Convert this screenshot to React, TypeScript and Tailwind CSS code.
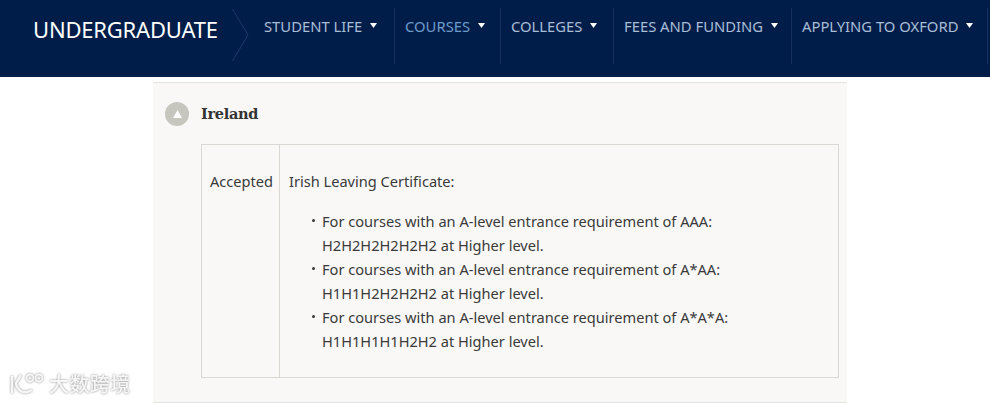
const navItems = [
  { label: "STUDENT LIFE", width: "w-[149px]", padding: "pl-[18px]", textColor: "text-[#a9bdd6]" },
  { label: "COURSES", width: "w-[106px]", padding: "pl-[10px]", textColor: "text-[#6d9ccb]" },
  { label: "COLLEGES", width: "w-[113px]", padding: "pl-[10px]", textColor: "text-[#a9bdd6]" },
  { label: "FEES AND FUNDING", width: "w-[178px]", padding: "pl-[10px]", textColor: "text-[#a9bdd6]" },
  { label: "APPLYING TO OXFORD", width: "w-[196px]", padding: "pl-[10px]", textColor: "text-[#a9bdd6]" },
];

const courses = [
  { level: "AAA", grades: "H2H2H2H2H2H2" },
  { level: "A*AA", grades: "H1H1H2H2H2H2" },
  { level: "A*A*A", grades: "H1H1H1H1H2H2" },
];

function Header() {
  return (
    <header className="flex h-[77px] bg-[#001d4a] font-['Noto_Sans',sans-serif]">
      <div className="w-[232px] shrink-0 pl-[33px] pt-[12px] text-[22px] leading-[34px] tracking-[-0.2px] text-white">
        UNDERGRADUATE
      </div>
      <svg width="17" height="54" viewBox="0 0 17 54" className="mt-[8px] shrink-0" fill="none">
        <path d="M0.5 1 L16 27 L0.5 53" stroke="#1c3b68" strokeWidth="1" />
      </svg>
      <nav className="ml-[-3px] mt-[8px] flex h-[56px]">
        {navItems.map((item) => (
          <div
            key={item.label}
            className={`${item.width} ${item.padding} flex h-full items-start whitespace-nowrap border-r border-[#14315c] pt-[8px]`}
          >
            <span className={`text-[14.8px] leading-[20px] ${item.textColor}`}>{item.label}</span>
            <svg width="7" height="5" viewBox="0 0 7 5" className="ml-[8px] mt-[7px]">
              <path d="M0 0 H7 L3.5 5 Z" fill="#ffffff" />
            </svg>
          </div>
        ))}
      </nav>
    </header>
  );
}

function Watermark() {
  return (
    <div className="absolute left-[8px] bottom-[7px] flex items-center gap-[3px] drop-shadow-[0_0_1px_#8f8f8f]">
      <svg width="38" height="24" viewBox="0 0 38 24" fill="none" stroke="#f6f6f6" strokeWidth="2.5">
        <path d="M4 4 V21" />
        <path d="M13 3 L8 11 C9 19 16 23 24 18" />
        <circle cx="22" cy="6" r="3.5" strokeWidth="2" />
        <circle cx="31" cy="6" r="3.5" strokeWidth="2" />
      </svg>
      <span className="font-['Noto_Sans_CJK_SC',sans-serif] text-[20px] leading-[24px] font-medium tracking-[0.4px] text-[#f6f6f6]">
        大数跨境
      </span>
    </div>
  );
}

export default function App() {
  return (
    <div className="relative h-[403px] w-[990px] overflow-hidden bg-white">
      <Header />
      <main className="ml-[153px] mt-[5px] h-[321px] w-[694px] border-y border-[#e5e3de] bg-[#f9f8f6] pl-[12px] pr-[8px]">
        <div className="flex h-[61px] items-center gap-[12px]">
          <div className="flex h-[24px] w-[24px] items-center justify-center rounded-full bg-[#c6c5be]">
            <svg width="9" height="8" viewBox="0 0 9 8">
              <path d="M4.5 0 L9 8 H0 Z" fill="#ffffff" />
            </svg>
          </div>
          <h3 className="font-['DejaVu_Serif',serif] text-[14.5px] leading-[24px] font-bold tracking-[-0.3px] text-[#333333]">
            Ireland
          </h3>
        </div>
        <div className="ml-[36px] flex h-[234px] border border-[#dad8d2] font-['Noto_Sans',sans-serif] text-[14.6px] leading-[24px] text-[#3a3a3a]">
          <div className="w-[78px] shrink-0 border-r border-[#dad8d2] pl-[8px] pt-[24px]">Accepted</div>
          <div className="pl-[9px] pt-[24px]">
            <p>Irish Leaving Certificate:</p>
            <ul className="mt-[16px] pl-[33px]">
              {courses.map((c) => (
                <li key={c.level} className="relative">
                  <span className="absolute left-[-10px] top-[10px] h-[3px] w-[3px] rounded-full bg-[#3a3a3a]" />
                  For courses with an A-level entrance requirement of {c.level}:
                  <br />
                  {c.grades} at Higher level.
                </li>
              ))}
            </ul>
          </div>
        </div>
      </main>
      <Watermark />
    </div>
  );
}
